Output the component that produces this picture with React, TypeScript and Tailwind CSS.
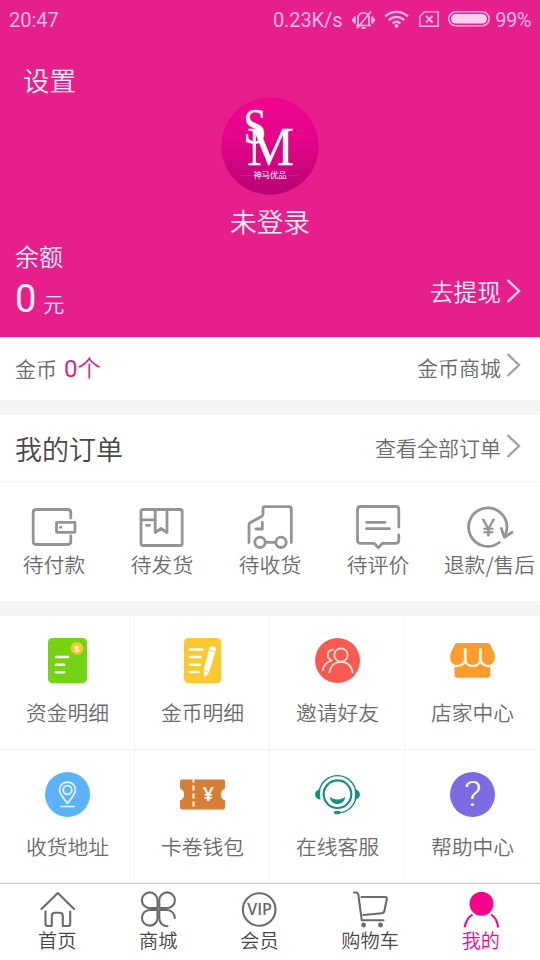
import type { ReactNode } from "react";

const gray = "#949494";
const dark = "#6b6b6b";

function Chevron({ color }: { color: string }) {
  return (
    <svg width="16" height="26" viewBox="0 0 16 26" fill="none" stroke={color} strokeWidth="2.4">
      <path d="M2.500 2 L14 13 L2.500 24" />
    </svg>
  );
}

function StatusBar() {
  return (
    <div className="flex h-10 items-center pl-[9px] pr-[9px] font-['Roboto','Liberation_Sans',sans-serif] text-[20px] font-normal text-[#ffb9e4]">
      <span className="flex-1">20:47</span>
      <span className="mr-[10px] tracking-[-0.1px]">0.23K/s</span>
      <svg className="mr-[9px]" width="23" height="20" viewBox="0 0 23 20" fill="none" stroke="currentColor" strokeWidth="1.700">
        <path d="M6 15 V8 C6 4.500 8.500 3 11.500 3 C14.500 3 17 4.500 17 8 V15" />
        <path d="M4 15.500 H19 M5 18.500 L19 1.500" />
        <path d="M2.700 6.500 V13.500 M20.300 6.500 V13.500 M.9 8.500 V11.500 M22.100 8.500 V11.500" strokeWidth="2" />
        <path d="M9.500 17.800 H13.500" strokeWidth="2.200" />
      </svg>
      <svg className="mb-[3px] mr-[10px]" width="25" height="18" viewBox="0 0 25 18" fill="none" stroke="currentColor" strokeWidth="2.300">
        <path d="M1 6.500 C7.500 .3 17.500 .3 24 6.500 M4.800 10 C9.500 6 15.500 6 20.200 10 M8.500 13.300 C11 11.300 14 11.300 16.500 13.300" />
        <circle cx="12.500" cy="15.800" r="1.900" fill="currentColor" stroke="none" />
      </svg>
      <svg className="mb-[2px] mr-[9px]" width="20" height="16" viewBox="0 0 20 16" fill="none" stroke="currentColor" strokeWidth="1.500">
        <path d="M5.500 .8 H19.200 V15.200 H.8 V5.500 Z" />
        <path d="M7 5 L13.500 11.500 M13.500 5 L7 11.500" strokeWidth="1.800" />
      </svg>
      <svg className="mb-[2px] mr-[5px]" width="42" height="16" viewBox="0 0 42 16">
        <rect x=".8" y=".8" width="40.400" height="14" rx="7" fill="none" stroke="currentColor" strokeWidth="1.500" />
        <rect x="3" y="3" width="36" height="9.600" rx="4.800" fill="#ffd0ee" />
      </svg>
      <span className="tracking-[-0.5px]">99%</span>
    </div>
  );
}

function Logo() {
  return (
    <svg width="98" height="98" viewBox="0 0 98 98">
      <defs>
        <linearGradient id="logo" x1="0" y1="0" x2="0" y2="1">
          <stop offset="0" stopColor="#f2058f" />
          <stop offset="0.45" stopColor="#e3048a" />
          <stop offset="1" stopColor="#b80473" />
        </linearGradient>
      </defs>
      <circle cx="49" cy="49" r="48.700" fill="url(#logo)" />
      <g fill="#fff" stroke="#fff" strokeWidth=".3" fontFamily="Liberation Serif, serif">
        <text x="22.500" y="46" fontSize="50" textLength="23" lengthAdjust="spacingAndGlyphs">S</text>
        <text x="26" y="68" fontSize="55" textLength="47" lengthAdjust="spacingAndGlyphs">M</text>
      </g>
      <path d="M20 78.500 H31 M67 78.500 H78" stroke="#d92c98" strokeWidth=".6" />
      <text x="49" y="81.300" fontSize="8.300" fontWeight="400" fill="#fff" textAnchor="middle" fontFamily="Noto Sans CJK SC, sans-serif">神马优品</text>
    </svg>
  );
}

function OrderIcon({ children }: { children: ReactNode }) {
  return (
    <svg width="48" height="48" viewBox="0 0 48 48" fill="none" stroke={gray} strokeWidth="2.800" strokeLinecap="round" strokeLinejoin="round">
      {children}
    </svg>
  );
}

const orders = [
  {
    label: "待付款",
    icon: (
      <OrderIcon>
        <path d="M40.800 15 V9.500 Q40.800 6.500 37.800 6.500 H6.200 Q3.200 6.500 3.200 9.500 V38.500 Q3.200 41.500 6.200 41.500 H37.800 Q40.800 41.500 40.800 38.500 V33" />
        <rect x="26.500" y="19.300" width="18.500" height="10" rx=".5" />
        <circle cx="30.700" cy="24.300" r="1.500" fill={gray} stroke="none" />
      </OrderIcon>
    ),
  },
  {
    label: "待发货",
    icon: (
      <OrderIcon>
        <rect x="3" y="6.500" width="41.200" height="36" rx="2" />
        <path d="M17.200 7 V29.500 L23 25.500 L29 29.500 V7 M3 16.800 H17 M8.500 22.300 H11.500" />
      </OrderIcon>
    ),
  },
  {
    label: "待收货",
    icon: (
      <OrderIcon>
        <path d="M3 39.500 V22 Q3 20.300 4.500 19.500 L15.500 13.500 Q17 12.700 17 11 V5.500 Q17 3.700 19 3.700 H43 Q45.300 3.700 45.300 6 V39.500" />
        <path d="M16.300 19.300 V26 H10 M20 39.300 H29" />
        <circle cx="14" cy="39.300" r="5.200" />
        <circle cx="35" cy="39.300" r="5.200" />
      </OrderIcon>
    ),
  },
  {
    label: "待评价",
    icon: (
      <OrderIcon>
        <path d="M44.800 24 V6.500 Q44.800 3.500 41.800 3.500 H6.500 Q3.500 3.500 3.500 6.500 V37.300 Q3.500 40.300 6.500 40.300 H20 L24.300 44.700 L28.500 40.300 H41.800 Q44.800 40.300 44.800 37.300 V32" />
        <path d="M12.500 19.300 H31 M12.500 25.700 H35.500" />
      </OrderIcon>
    ),
  },
  {
    label: "退款/售后",
    icon: (
      <OrderIcon>
        <path d="M33.300 39.500 A19.200 19.200 0 1 1 41 24 C41 28 39.500 31 38.700 33.700" />
        <path d="M35.300 25.500 L38.500 34.300 L46 29.300" />
        <text x="22.300" y="33" fontSize="24" fontWeight="400" textAnchor="middle" fill={gray} strokeWidth=".5" fontFamily="Noto Sans, sans-serif">¥</text>
      </OrderIcon>
    ),
  },
];

function Tile({ children }: { children: ReactNode }) {
  return (
    <svg className="overflow-visible" width="45" height="45" viewBox="0 0 45 45" fill="none" stroke="#fff" strokeWidth="2" strokeLinecap="round" strokeLinejoin="round">
      {children}
    </svg>
  );
}

const services = [
  {
    label: "资金明细",
    icon: (
      <Tile>
        <rect x="3" y="0" width="39" height="45" rx="4.500" fill="#74d411" stroke="none" />
        <path d="M11 19 H23 M11 26.700 H19 M11 34.300 H19" strokeWidth="2.500" />
        <circle cx="32" cy="10.300" r="6.400" fill="#fbc52f" stroke="none" />
        <text x="32" y="13.800" fontSize="9.500" fontWeight="700" textAnchor="middle" fill="#fff" stroke="none" fontFamily="Liberation Sans, sans-serif">$</text>
      </Tile>
    ),
  },
  {
    label: "金币明细",
    icon: (
      <Tile>
        <rect x="4" y="0" width="37.300" height="45" rx="4.500" fill="#fdc931" stroke="none" />
        <path d="M10 11.500 H22.500 M10 19.100 H20.500 M10 26.700 H20 M10 34 H18.500" strokeWidth="2.500" />
        <path d="M29.300 9.700 Q30 7.800 32 8.300 L34.500 9 Q36.500 9.600 36 11.600 L29 34.500 L25.600 38.500 Q24.600 38.800 24.200 38 L23.500 32.500 Z" fill="#fff" stroke="none" />
        <path d="M28.800 11.900 L35.600 13.900 M23.300 32.500 L28.700 34.300" stroke="#fdc931" strokeWidth=".7" />
      </Tile>
    ),
  },
  {
    label: "邀请好友",
    icon: (
      <Tile>
        <circle cx="22.500" cy="22.500" r="22.500" fill="#fc5a50" stroke="none" />
        <g stroke="#ffe9df" strokeWidth="1.700">
          <circle cx="26" cy="17" r="6.700" />
          <path d="M14.500 34.500 C16 20.200 36 20.200 37.600 34.500" />
          <path d="M18 11.600 C11.500 12 11 20.500 16.700 22.500 C11.500 24 8.500 27.500 7.800 31.800" />
        </g>
      </Tile>
    ),
  },
  {
    label: "店家中心",
    icon: (
      <Tile>
        <path d="M7.500 5 H37.500 Q39.500 5 40.300 6.700 L44.300 15 C46 20 44 25 40.300 27 V36.500 Q40.300 39.800 37 39.800 H7.800 Q4.500 39.800 4.500 36.500 V27 C1 25 -1 20 .7 15 L4.700 6.700 Q5.500 5 7.500 5 Z" fill="#fc9c2d" stroke="none" />
        <path d="M3 27.300 C8 29.300 14.500 26.500 15.200 21.500 C15.800 30 29.700 30 30.300 21.500 C31 26.500 37 29.300 42 27.300" stroke="#fff8e8" strokeWidth="2.400" />
        <path d="M15.200 11.500 V21.500 M30.300 11.500 V21.500" stroke="#fff8e8" strokeWidth="2.800" />
      </Tile>
    ),
  },
  {
    label: "收货地址",
    icon: (
      <Tile>
        <circle cx="22.500" cy="22.500" r="22.500" fill="#5cb3fc" stroke="none" />
        <g strokeWidth="1.700" stroke="#e8fbff">
          <path d="M22.500 31.500 C19 26.500 14.500 22 14.500 18 C14.500 7.500 30.500 7.500 30.500 18 C30.500 22 26 26.500 22.500 31.500 Z" />
          <circle cx="22.500" cy="18" r="4.300" />
          <path d="M16 34.500 H29" />
        </g>
      </Tile>
    ),
  },
  {
    label: "卡卷钱包",
    icon: (
      <Tile>
        <path d="M2 7.500 H43 Q45 7.500 45 9.500 V16.500 C39.500 18 39.500 27 45 28.500 V35.500 Q45 37.500 43 37.500 H2 Q0 37.500 0 35.500 V28.500 C5.500 27 5.500 18 0 16.500 V9.500 Q0 7.500 2 7.500 Z" fill="#d67d36" stroke="none" />
        <path d="M13.500 7.500 V37.500" strokeDasharray="5 3" strokeDashoffset="2" strokeLinecap="butt" />
        <text x="28.300" y="29.300" fontSize="19.500" fontWeight="600" textAnchor="middle" fill="#fff" stroke="none" fontFamily="Noto Sans, sans-serif">¥</text>
      </Tile>
    ),
  },
  {
    label: "在线客服",
    icon: (
      <Tile>
        <g stroke="#1b8e7d">
          <circle cx="22.500" cy="22.200" r="13.800" strokeWidth="2.200" />
          <path d="M4.500 17.500 C10 -1 35 -1 40.500 17.500 M40.500 27.500 C38 36 31 40.500 23 40.700" strokeWidth="1.400" />
        </g>
        <g fill="#1b8e7d" stroke="none">
          <path d="M5.500 17.300 C-1.800 18 -1.800 27 5.500 27.700 Q4.200 22.500 5.500 17.300 Z" />
          <path d="M39.500 17.300 C46.800 18 46.800 27 39.500 27.700 Q40.800 22.500 39.500 17.300 Z" />
          <path d="M14.800 24.800 C19 28.500 26 28.500 30.200 24.800 C29.500 34.500 15.500 34.500 14.800 24.800 Z" />
          <rect x="19" y="39" width="6.500" height="3.200" rx="1.600" />
        </g>
      </Tile>
    ),
  },
  {
    label: "帮助中心",
    icon: (
      <Tile>
        <circle cx="22.500" cy="22.500" r="22.500" fill="#7c6ae2" stroke="none" />
        <text x="14" y="34.300" fontSize="35" textLength="17.500" lengthAdjust="spacingAndGlyphs" fill="#fff" stroke="none" fontWeight="300" fontFamily="Roboto, sans-serif">?</text>
      </Tile>
    ),
  },
];

function TabIcon({ color = dark, children }: { color?: string; children: ReactNode }) {
  return (
    <svg width="36" height="37" viewBox="0 0 36 37" fill="none" stroke={color} strokeWidth="2.100" strokeLinecap="round" strokeLinejoin="round">
      {children}
    </svg>
  );
}

const tabs = [
  {
    label: "首页",
    icon: (
      <TabIcon>
        <path d="M2.500 18 L18.800 2 L35 18" />
        <path d="M6.500 20.500 V33 Q6.500 35 8.500 35 H12.800 V25 Q12.800 21.700 16 21.700 H20.500 Q23.800 21.700 23.800 25 V35 H29.200 Q31.200 35 31.200 33 V20.500" />
      </TabIcon>
    ),
  },
  {
    label: "商城",
    icon: (
      <TabIcon>
        <path d="M17.500 17 H9.700 A7.800 7.800 0 1 1 17.500 9.200 Z" />
        <path d="M19.300 17 V9.200 A7.800 7.800 0 1 1 27.100 17 Z" />
        <path d="M17.500 19 V27.300 A7.800 7.800 0 1 1 9.700 19 Z" />
        <path d="M34.800 27 A7.900 7.900 0 0 0 27 19 H19.300 V27.300 A7.900 7.900 0 0 0 27.500 35.200" />
      </TabIcon>
    ),
  },
  {
    label: "会员",
    icon: (
      <TabIcon>
        <circle cx="18.200" cy="18.500" r="16.300" />
        <text x="6.200" y="24" fontSize="15.500" fontWeight="600" textLength="24.800" lengthAdjust="spacingAndGlyphs" fill={dark} stroke="none" fontFamily="Open Sans, sans-serif">VIP</text>
      </TabIcon>
    ),
  },
  {
    label: "购物车",
    icon: (
      <TabIcon>
        <path d="M2 1.500 H4 Q6 1.500 6.300 3.500 L9.800 29.300 H31.500 M9.500 6 H33 Q35.200 6 34.800 8 L32.500 19.500 Q32 22 29.800 22.200 L11.500 24" />
        <circle cx="11.600" cy="34" r="2.400" fill={dark} stroke="none" />
        <circle cx="28.500" cy="34" r="2.400" fill={dark} stroke="none" />
      </TabIcon>
    ),
  },
  {
    label: "我的",
    active: true,
    icon: (
      <TabIcon color="#f7048d">
        <circle cx="18.500" cy="12.800" r="12" fill="#f7048d" stroke="none" />
        <path d="M1.800 35.500 C2.800 30.500 5.300 26.500 8.800 24 M28.800 24 C32.300 26.500 34.300 30.500 35 35.500" />
      </TabIcon>
    ),
  },
];

export default function App() {
  return (
    <main className="flex h-[960px] w-[540px] flex-col overflow-hidden bg-white font-['Noto_Sans_CJK_SC',sans-serif] font-[350] text-[#6c6c6c]">
      <header className="h-[337px] bg-[#e61f8d] text-[#fff0fa]">
        <StatusBar />

        <div className="mt-[22px] flex h-[35px] items-center pl-[23px] text-[26.500px]">设置</div>

        <div className="flex flex-col items-center">
          <Logo />
          <div className="mt-[9px] h-[34px] text-[26.700px] leading-[34px]">未登录</div>
        </div>

        <div className="mt-[3px] flex h-[30px] items-center pl-[15px] text-[24px]">余额</div>

        <div className="flex h-[55px] items-start justify-between pl-[15px] pr-[19px]">
          <div className="flex items-baseline leading-[56px]">
            <span className="font-['Roboto',sans-serif] text-[38px] font-normal">0</span>
            <span className="ml-[7px] text-[21px]">元</span>
          </div>
          <div className="flex h-10 items-center">
            <span className="mr-[4px] mt-[2px] text-[23.700px]">去提现</span>
            <div className="mb-[1px]"><Chevron color="#ffd3ec" /></div>
          </div>
        </div>
      </header>

      <section className="flex h-[63px] items-center justify-between pl-[15px] pr-[19px]">
        <div className="flex items-center text-[21px]">
          <span className="mt-[1px]">金币</span>
          <span className="ml-[7px] text-[23.500px] text-[#dc1f83]">
            <span className="font-['Roboto',sans-serif] text-[24px] font-normal">0</span>个
          </span>
        </div>
        <div className="flex items-center text-[21px]">
          <span className="mr-[4px] mb-[2px]">金币商城</span>
          <div className="mb-[8px]"><Chevron color="#a3a3a3" /></div>
        </div>
      </section>

      <div className="h-[15px] bg-[#f4f4f4]" />

      <section className="h-[186px]">
        <div className="flex h-[67px] items-center justify-between border-b border-[#f2f2f2] pl-[15px] pr-[19px]">
          <h2 className="mt-[2px] text-[27px] text-[#484848]">我的订单</h2>
          <div className="flex items-center text-[21px]">
            <span className="mr-[4px]">查看全部订单</span>
            <div className="mb-[5px]"><Chevron color="#a3a3a3" /></div>
          </div>
        </div>

        <div className="grid grid-cols-5 pt-[21px]">
          {orders.map((item) => (
            <div key={item.label} className="flex flex-col items-center whitespace-nowrap last:pl-[7px]">
              {item.icon}
              <span className="text-[20.800px] leading-[26px]">{item.label}</span>
            </div>
          ))}
        </div>
      </section>

      <div className="h-[15px] bg-[#f4f4f4]" />

      <section className="grid h-[267px] grid-cols-4 grid-rows-2">
        {services.map((item) => (
          <div key={item.label} className="flex flex-col items-center border-r border-b border-[#f4f4f4] pt-[22px] pl-px">
            {item.icon}
            <span className="mt-[14px] text-[20.800px] leading-[30px]">{item.label}</span>
          </div>
        ))}
      </section>

      <nav className="flex h-[77px] justify-between border-t border-[#c8c8c8] pl-[38px] pr-[40px] pt-[7px] text-[#474747]">
        {tabs.map((tab) => (
          <div key={tab.label} className={tab.active ? "flex flex-col items-center text-[#f7048d]" : "flex flex-col items-center"}>
            {tab.icon}
            <span className="text-[19.200px] leading-[24px]">{tab.label}</span>
          </div>
        ))}
      </nav>
    </main>
  );
}
